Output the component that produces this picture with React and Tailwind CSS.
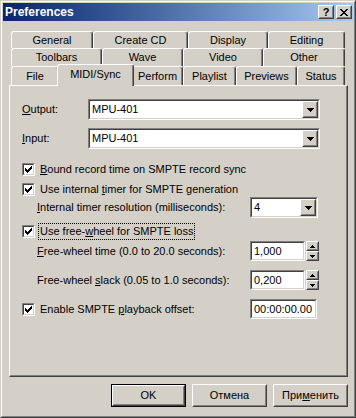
import React from 'react'

// classic 3D edges
function Sunken({ className = '', innerClassName = '', children }) {
  return (
    <div className={`border border-t-[#808080] border-l-[#808080] border-r-white border-b-white ${className}`}>
      <div className={`h-full border border-t-[#404040] border-l-[#404040] border-r-[#D4D0C8] border-b-[#D4D0C8] bg-white ${innerClassName}`}>
        {children}
      </div>
    </div>
  )
}

function Raised({ className = '', innerClassName = '', children }) {
  return (
    <div className={`border border-t-white border-l-white border-r-[#404040] border-b-[#404040] bg-[#D4D0C8] ${className}`}>
      <div className={`h-full border border-t-[#D4D0C8] border-l-[#D4D0C8] border-r-[#808080] border-b-[#808080] flex items-center justify-center ${innerClassName}`}>
        {children}
      </div>
    </div>
  )
}

const U = ({ children }) => <span className="underline underline-offset-[1px]">{children}</span>

function Check() {
  return (
    <Sunken className="w-[13px] h-[13px] shrink-0" innerClassName="flex items-center justify-center">
      <svg width="7" height="7" viewBox="0 0 7 7" shapeRendering="crispEdges">
        <path fill="#000" d="M6 0h1v1h-1z M5 1h2v1h-2z M0 2h1v1h-1z M4 2h3v1h-3z M0 3h2v1h-2z M3 3h3v1h-3z M0 4h5v1h-5z M1 5h3v1h-3z M2 6h1v1h-1z" />
      </svg>
    </Sunken>
  )
}

function Arrow() {
  return (
    <svg width="7" height="4" viewBox="0 0 7 4" shapeRendering="crispEdges">
      <path fill="#000" d="M0 0h7v1h-7z M1 1h5v1h-5z M2 2h3v1h-3z M3 3h1v1h-1z" />
    </svg>
  )
}

function Combo({ className, value }) {
  return (
    <Sunken className={`h-[21px] ${className}`} innerClassName="flex items-stretch">
      <span className="flex-1 pl-[2px] flex items-center">{value}</span>
      <Raised className="w-[16px]">
        <Arrow />
      </Raised>
    </Sunken>
  )
}

function Spin() {
  return (
    <div className="flex flex-col w-[13px] h-[20px] ml-[1px]">
      <Raised className="flex-1">
        <svg width="5" height="3" viewBox="0 0 5 3" shapeRendering="crispEdges">
          <path fill="#000" d="M2 0h1v1h-1z M1 1h3v1h-3z M0 2h5v1h-5z" />
        </svg>
      </Raised>
      <Raised className="flex-1">
        <svg width="5" height="3" viewBox="0 0 5 3" shapeRendering="crispEdges">
          <path fill="#000" d="M0 0h5v1h-5z M1 1h3v1h-3z M2 2h1v1h-1z" />
        </svg>
      </Raised>
    </div>
  )
}

const tabRows = [
  { h: 'h-[17px]', tabs: [['General', 'w-[82px]'], ['Create CD', 'w-[95px]'], ['Display', 'w-[80px]'], ['Editing', 'w-[77px]']] },
  { h: 'h-[18px]', tabs: [['Toolbars', 'w-[91px]'], ['Wave', 'w-[81px]'], ['Video', 'w-[80px]'], ['Other', 'w-[82px]']] },
  {
    h: 'h-[19px]',
    tabs: [['File', 'w-[48px]'], ['MIDI/Sync', 'w-[77px]', true], ['Perform', 'w-[51px]'], ['Playlist', 'w-[53px]'], ['Previews', 'w-[61px]'], ['Status', 'w-[48px]']],
  },
]

export default function App() {
  return (
    <div className="w-[356px] h-[418px] bg-[#D4D0C8] border border-t-[#D4D0C8] border-l-[#D4D0C8] border-r-[#404040] border-b-[#404040] font-['Liberation_Sans',Arial,sans-serif] text-[11px] text-black leading-none">
      <div className="h-full border border-t-white border-l-white border-r-[#808080] border-b-[#808080] p-px flex flex-col">
        {/* title bar */}
        <div className="h-[18px] shrink-0 flex items-center bg-linear-to-r from-[#0A246A] to-[#A6CAF0] pl-[2px] pr-[1px]">
          <span className="flex-1 text-white font-bold text-[12px]">Preferences</span>
          <Raised className="w-[16px] h-[14px]">
            <span className="font-bold text-[11px] leading-none">?</span>
          </Raised>
          <Raised className="w-[16px] h-[14px] ml-[2px]">
            <svg width="8" height="7" viewBox="0 0 8 7" shapeRendering="crispEdges">
              <path fill="#000" d="M0 0h2v1h-2z M6 0h2v1h-2z M1 1h2v1h-2z M5 1h2v1h-2z M2 2h4v1h-4z M3 3h2v1h-2z M2 4h4v1h-4z M1 5h2v1h-2z M5 5h2v1h-2z M0 6h2v1h-2z M6 6h2v1h-2z" />
            </svg>
          </Raised>
        </div>

        {/* tabs */}
        <div className="mt-[10px] ml-[8px] flex flex-col">
          {tabRows.map((row, i) => (
            <div key={i} className={`flex ${row.h}`}>
              {row.tabs.map(([label, w, sel]) => (
                <div
                  key={label}
                  className={`${w} flex items-center justify-center border-t border-l border-r border-t-white border-l-white border-r-[#404040] rounded-t-[3px] shadow-[inset_-1px_0_#808080] bg-[#D4D0C8] ${
                    sel ? 'relative z-10 -mx-[2px] -mt-[2px] h-[22px] pb-[3px]' : 'h-full'
                  }`}
                >
                  {label}
                </div>
              ))}
            </div>
          ))}
        </div>

        {/* panel */}
        <div className="ml-[6px] mr-[5px] h-[292px] shrink-0 border border-t-white border-l-white border-r-[#404040] border-b-[#404040] shadow-[inset_-1px_-1px_#808080]">
          <div className="pl-[12px] pt-[13px] flex flex-col">
            <div className="flex items-center h-[21px]">
              <span className="w-[66px]"><U>O</U>utput:</span>
              <Combo className="w-[232px]" value="MPU-401" />
            </div>
            <div className="flex items-center h-[21px] mt-[8px]">
              <span className="w-[66px]"><U>I</U>nput:</span>
              <Combo className="w-[232px]" value="MPU-401" />
            </div>

            <div className="flex items-center h-[15px] mt-[13px]">
              <Check />
              <span className="ml-[5px]"><U>B</U>ound record time on SMPTE record sync</span>
            </div>
            <div className="flex items-center h-[15px] mt-[5px]">
              <Check />
              <span className="ml-[5px]">Use internal <U>t</U>imer for SMPTE generation</span>
            </div>

            <div className="flex items-center h-[21px]">
              <span className="w-[228px] pl-[15px]"><U>I</U>nternal timer resolution (milliseconds):</span>
              <Combo className="w-[68px]" value="4" />
            </div>

            <div className="flex items-center h-[15px] mt-[6px]">
              <Check />
              <span className="ml-[3px] border border-dotted border-black px-px leading-[15px]">Use free-<U>w</U>heel for SMPTE loss</span>
            </div>

            <div className="flex items-center h-[20px] mt-[2px]">
              <span className="w-[228px] pl-[15px]"><U>F</U>ree-wheel time (0.0 to 20.0 seconds):</span>
              <Sunken className="w-[55px] h-[20px]" innerClassName="flex items-center pl-[2px]">1,000</Sunken>
              <Spin />
            </div>
            <div className="flex items-center h-[20px] mt-[9px]">
              <span className="w-[228px] pl-[15px]">Free-wheel <U>s</U>lack (0.05 to 1.0 seconds):</span>
              <Sunken className="w-[55px] h-[20px]" innerClassName="flex items-center pl-[2px]">0,200</Sunken>
              <Spin />
            </div>

            <div className="flex items-center h-[20px] mt-[9px]">
              <div className="w-[228px] flex items-center">
                <Check />
                <span className="ml-[5px]">Enable SMPTE <U>p</U>layback offset:</span>
              </div>
              <Sunken className="w-[67px] h-[20px]" innerClassName="flex items-center pl-[2px]">00:00:00.00</Sunken>
            </div>
          </div>
        </div>

        {/* buttons */}
        <div className="mt-[7px] flex justify-end gap-[6px] mr-[5px]">
          <div className="border border-black">
            <Raised className="w-[73px] h-[21px]">OK</Raised>
          </div>
          <Raised className="w-[75px] h-[23px]">Отмена</Raised>
          <Raised className="w-[75px] h-[23px]">При<U>м</U>енить</Raised>
        </div>
      </div>
    </div>
  )
}
